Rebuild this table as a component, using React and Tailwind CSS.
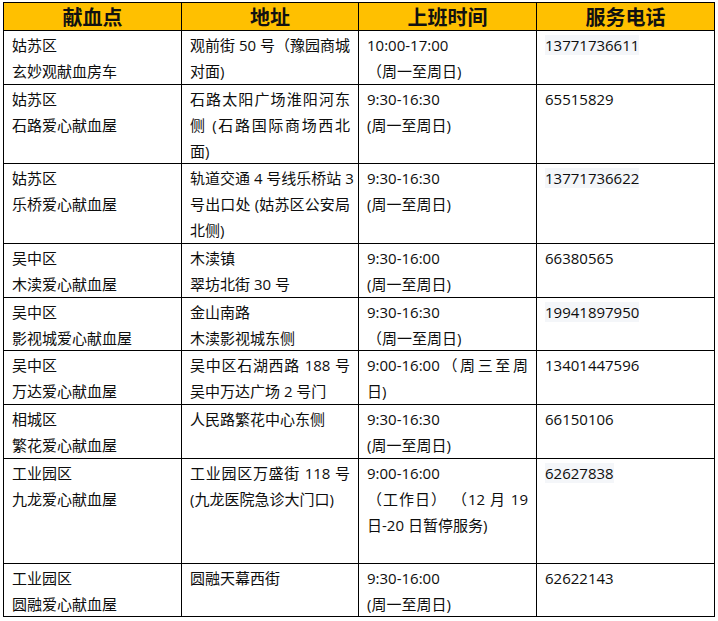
import React from "react";

const J = (t) => ({ t, j: true });
const H = (t) => ({ t, hl: true });

const rows = [
  {
    h: "h-[53px]",
    c: [
      ["姑苏区", "玄妙观献血房车"],
      [J("观前街 50 号（豫园商城"), "对面)"],
      ["10:00-17:00", "（周一至周日)"],
      [H("13771736611")],
    ],
  },
  {
    h: "h-[78px]",
    c: [
      ["姑苏区", "石路爱心献血屋"],
      [J("石路太阳广场淮阳河东"), J("侧 (石路国际商场西北"), "面)"],
      ["9:30-16:30", "(周一至周日)"],
      ["65515829"],
    ],
  },
  {
    h: "h-[79px]",
    c: [
      ["姑苏区", "乐桥爱心献血屋"],
      [J("轨道交通 4 号线乐桥站 3"), J("号出口处 (姑苏区公安局"), "北侧)"],
      ["9:30-16:30", "(周一至周日)"],
      [H("13771736622")],
    ],
  },
  {
    h: "h-[53px]",
    c: [
      ["吴中区", "木渎爱心献血屋"],
      ["木渎镇", "翠坊北街 30 号"],
      ["9:30-16:00", "(周一至周日)"],
      ["66380565"],
    ],
  },
  {
    h: "h-[52px]",
    c: [
      ["吴中区", "影视城爱心献血屋"],
      ["金山南路", "木渎影视城东侧"],
      ["9:30-16:30", "（周一至周日)"],
      [H("19941897950")],
    ],
  },
  {
    h: "h-[53px]",
    c: [
      ["吴中区", "万达爱心献血屋"],
      [J("吴中区石湖西路 188 号"), "吴中万达广场 2 号门"],
      [J("9:00-16:00（周三至周"), "日)"],
      ["13401447596"],
    ],
  },
  {
    h: "h-[53px]",
    c: [
      ["相城区", "繁花爱心献血屋"],
      ["人民路繁花中心东侧"],
      ["9:30-16:30", "(周一至周日)"],
      ["66150106"],
    ],
  },
  {
    h: "h-[104px]",
    c: [
      ["工业园区", "九龙爱心献血屋"],
      [J("工业园区万盛街 118 号"), "(九龙医院急诊大门口)"],
      ["9:00-16:00", J("（工作日） （12 月 19"), "日-20 日暂停服务)"],
      [H("62627838")],
    ],
  },
  {
    h: "h-[52px]",
    c: [
      ["工业园区", "圆融爱心献血屋"],
      ["圆融天幕西街"],
      ["9:30-16:00", "(周一至周日)"],
      ["62622143"],
    ],
  },
];

const headers = ["献血点", "地址", "上班时间", "服务电话"];

function Line({ item }) {
  if (typeof item === "string") {
    return <div className="whitespace-nowrap">{item}</div>;
  }
  if (item.hl) {
    return (
      <div className="whitespace-nowrap">
        <span className="bg-[#f4f6f9]">{item.t}</span>
      </div>
    );
  }
  return (
    <div className="whitespace-nowrap text-justify [text-align-last:justify]">
      {item.t}
    </div>
  );
}

export default function App() {
  return (
    <div
      lang="zh-CN"
      className="w-[718px] h-[621px] bg-white pt-[2px] pl-[3px] text-[#0d0d0d] [text-spacing-trim:space-all]"
      style={{ fontFamily: '"Open Sans", "Noto Sans CJK SC", sans-serif' }}
    >
      <div className="inline-grid grid-cols-[177px_176px_177px_177px] gap-px bg-black p-px">
        {headers.map((h) => (
          <div
            key={h}
            className="h-[27px] bg-[#ffc000] flex items-center justify-center text-[20px] font-bold leading-none text-[#111]"
            style={{ fontFamily: '"Noto Sans CJK SC", sans-serif' }}
          >
            {h}
          </div>
        ))}
        {rows.map((r, ri) =>
          r.c.map((cell, ci) => (
            <div
              key={ri + "-" + ci}
              className={`${r.h} bg-white pl-2 pr-2 pt-px text-[15px] leading-[26px]`}
            >
              {cell.map((item, li) => (
                <Line key={li} item={item} />
              ))}
            </div>
          ))
        )}
      </div>
    </div>
  );
}
